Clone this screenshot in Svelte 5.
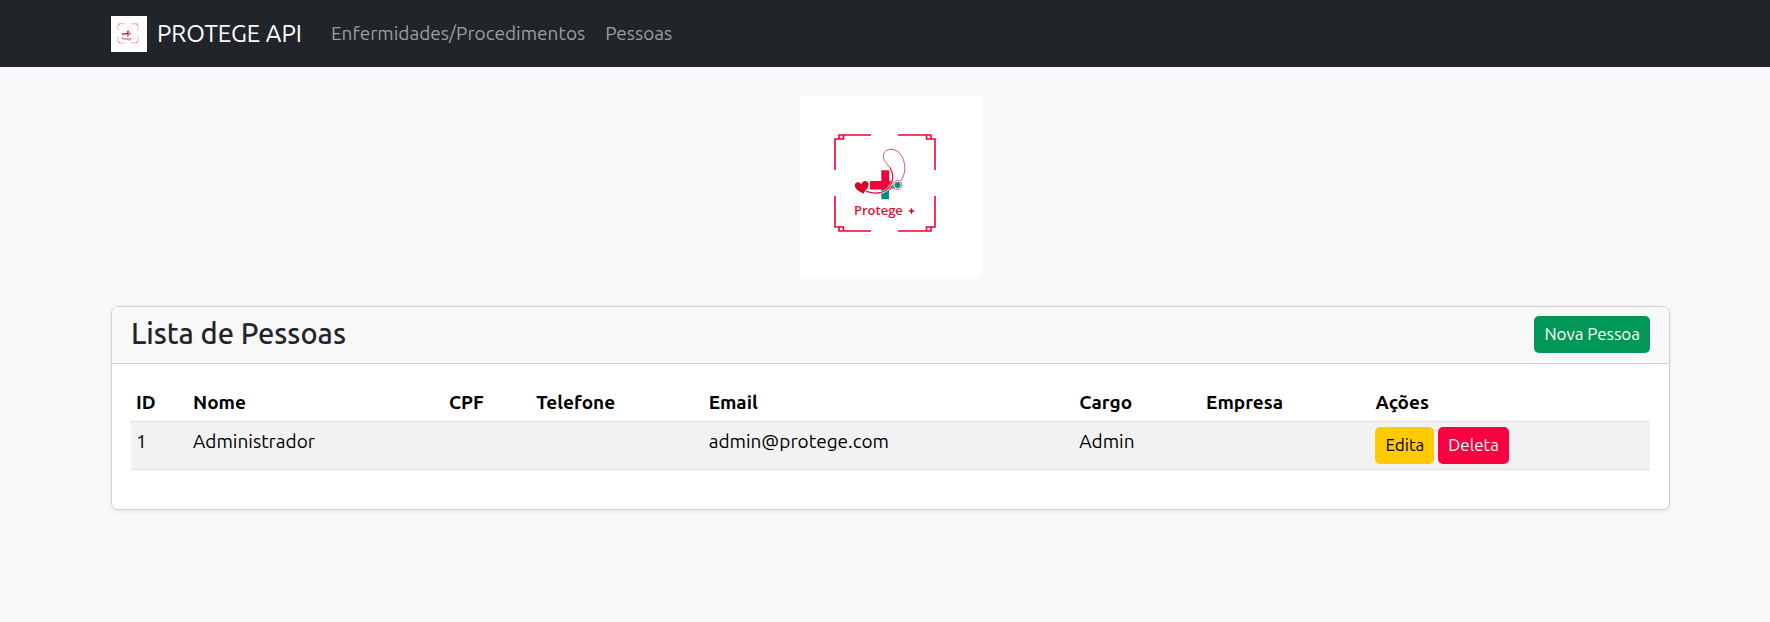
<script>
  const links = ['Enfermidades/Procedimentos', 'Pessoas'];

  const columns = [
    { label: 'ID', width: 3.75 },
    { label: 'Nome', width: 16.85 },
    { label: 'CPF', width: 5.75 },
    { label: 'Telefone', width: 11.35 },
    { label: 'Email', width: 24.4 },
    { label: 'Cargo', width: 8.35 },
    { label: 'Empresa', width: 11.15 },
    { label: 'Ações', width: 18.4 }
  ];

  const people = [
    { id: 1, nome: 'Administrador', cpf: '', telefone: '', email: 'admin@protege.com', cargo: 'Admin', empresa: '' }
  ];
</script>

{#snippet logo(cls)}
  <svg class={cls} viewBox="0 0 181 181" role="img" aria-label="Protege +">
    <rect width="181" height="181" fill="#fff" />
    <g fill="none" stroke="#f5002f" stroke-width="1.6">
      <path d="M35 74V43H43.5V39M39 43.5V39H71" />
      <path d="M135 74V43H126.5V39M131 43.5V39H98" />
      <path d="M35 100V131H43.5V135M39 130.5V135H71" />
      <path d="M135 100V131H126.5V135M131 130.5V135H98" />
    </g>
    <path fill="#078c85" d="M81.3 93H89V103.2H81.3ZM88 89.5H95V92.5H88Z" />
    <path fill="#f80038" d="M81.3 74.3H89.2V85H91V93.5H70V85H81.3Z" />
    <path
      fill="none" stroke="#fff" stroke-width="2.4"
      d="M67 96C76 99 85.5 97 89.8 90.5C94 84 93.2 77 90.3 71.5"
    />
    <path
      fill="none" stroke="#dc1238" stroke-width="1.2" stroke-linecap="round"
      d="M66.5 95.4C76 98.8 85.5 96.8 89.9 90.3C94 83.3 93.3 77 90.2 72"
    />
    <path
      fill="none" stroke="#d94558" stroke-width="0.9"
      d="M90.4 72.5C87.5 67.5 83.4 65 83.4 60.2C83.4 56.3 86.6 53.3 91 53.3C99.5 53.3 104.8 62.5 104.8 72C104.8 77.5 103.2 81.5 100.4 85"
    />
    <circle cx="97.5" cy="89" r="4.4" fill="#fff" stroke="#d94558" stroke-width="0.9" />
    <circle cx="97.5" cy="89" r="3" fill="#078c85" />
    <path
      fill="#dc0025"
      d="M63.5 97.8C61 95.8 55 94 54.7 89.6C54.6 86.3 58.8 84.9 61.3 88.2C62.3 84.4 67.4 83.8 68.4 87.3C69.5 91.3 65 94.2 63.5 97.8Z"
    />
    <text x="54" y="118.5" font-family="'Open Sans', sans-serif" font-size="13" font-weight="600" fill="#dc1238">Protege</text>
    <path fill="#dc1238" d="M111.5 111.4L112.6 114L115.2 115L112.6 116L111.5 118.8L110.4 116L107.8 115L110.4 114Z" />
  </svg>
{/snippet}

<nav class="navbar">
  <a class="brand" href="#inicio">
    {@render logo('brand-logo')}
    <span>PROTEGE API</span>
  </a>
  <div class="links">
    {#each links as link}
      <a href="#{link.toLowerCase()}">{link}</a>
    {/each}
  </div>
</nav>

<main>
  {@render logo('hero-logo')}

  <section class="card">
    <header>
      <h1>Lista de Pessoas</h1>
      <button class="btn success" type="button">Nova Pessoa</button>
    </header>
    <div class="card-body">
      <table>
        <colgroup>
          {#each columns as column}
            <col style="width: {column.width}%" />
          {/each}
        </colgroup>
        <thead>
          <tr>
            {#each columns as column}
              <th scope="col">{column.label}</th>
            {/each}
          </tr>
        </thead>
        <tbody>
          {#each people as person (person.id)}
            <tr>
              <td>{person.id}</td>
              <td>{person.nome}</td>
              <td>{person.cpf}</td>
              <td>{person.telefone}</td>
              <td>{person.email}</td>
              <td>{person.cargo}</td>
              <td>{person.empresa}</td>
              <td>
                <div class="actions">
                  <button class="btn warning" type="button">Edita</button>
                  <button class="btn danger" type="button">Deleta</button>
                </div>
              </td>
            </tr>
          {/each}
        </tbody>
      </table>
    </div>
  </section>
</main>

<style>
  :global(body) {
    margin: 0;
    background: #f8f9fb;
    color: #212529;
    font-family: Ubuntu, 'Noto Sans', sans-serif;
    font-size: 19px;
    line-height: 28px;
  }

  .navbar {
    display: flex;
    align-items: center;
    gap: 29px;
    box-sizing: border-box;
    min-height: 67px;
    padding: 0 100px 0 111px;
    background: #212529;
  }

  .navbar a {
    text-decoration: none;
  }

  .brand {
    display: flex;
    align-items: center;
    gap: 10px;
    color: #fff;
    font-size: 24px;
  }

  .brand-logo {
    width: 36px;
    height: 36px;
  }

  .links {
    display: flex;
    gap: 20px;
    padding-bottom: 2px;
  }

  .links a {
    color: #9b9d9e;
  }

  main {
    display: flex;
    flex-direction: column;
    gap: 29px;
    padding: 29px 100px 29px 111px;
  }

  .hero-logo {
    align-self: center;
    width: 181px;
    height: 181px;
  }

  .card {
    border: 1px solid #d0d1d2;
    border-radius: 7px;
    background: #fff;
    box-shadow: 0 2px 5px rgba(0, 0, 0, 0.08);
  }

  header {
    display: flex;
    align-items: flex-start;
    justify-content: space-between;
    min-height: 38px;
    padding: 9px 19px;
    border-bottom: 1px solid #d0d1d2;
    border-radius: 6px 6px 0 0;
    background: #f8f8f8;
  }

  h1 {
    margin: 0;
    font-size: 29px;
    font-weight: 500;
    line-height: 35px;
  }

  .card-body {
    padding: 19px 19px 39px;
  }

  table {
    width: 100%;
    border-collapse: collapse;
    table-layout: fixed;
    color: #000;
  }

  th,
  td {
    padding: 5px;
    border-bottom: 1px solid #dfe0e1;
    text-align: left;
    vertical-align: top;
  }

  th {
    font-weight: 700;
  }

  tbody tr {
    background: #f2f2f2;
  }

  .actions {
    display: flex;
    gap: 4px;
  }

  .btn {
    padding: 5px 10px 7px;
    border: 0;
    border-radius: 5px;
    color: #fff;
    font: inherit;
    font-size: 17px;
    line-height: 25px;
  }

  .success {
    background: #009757;
  }

  .warning {
    background: #ffca00;
    color: #000;
  }

  .danger {
    background: #fa0041;
  }
</style>
